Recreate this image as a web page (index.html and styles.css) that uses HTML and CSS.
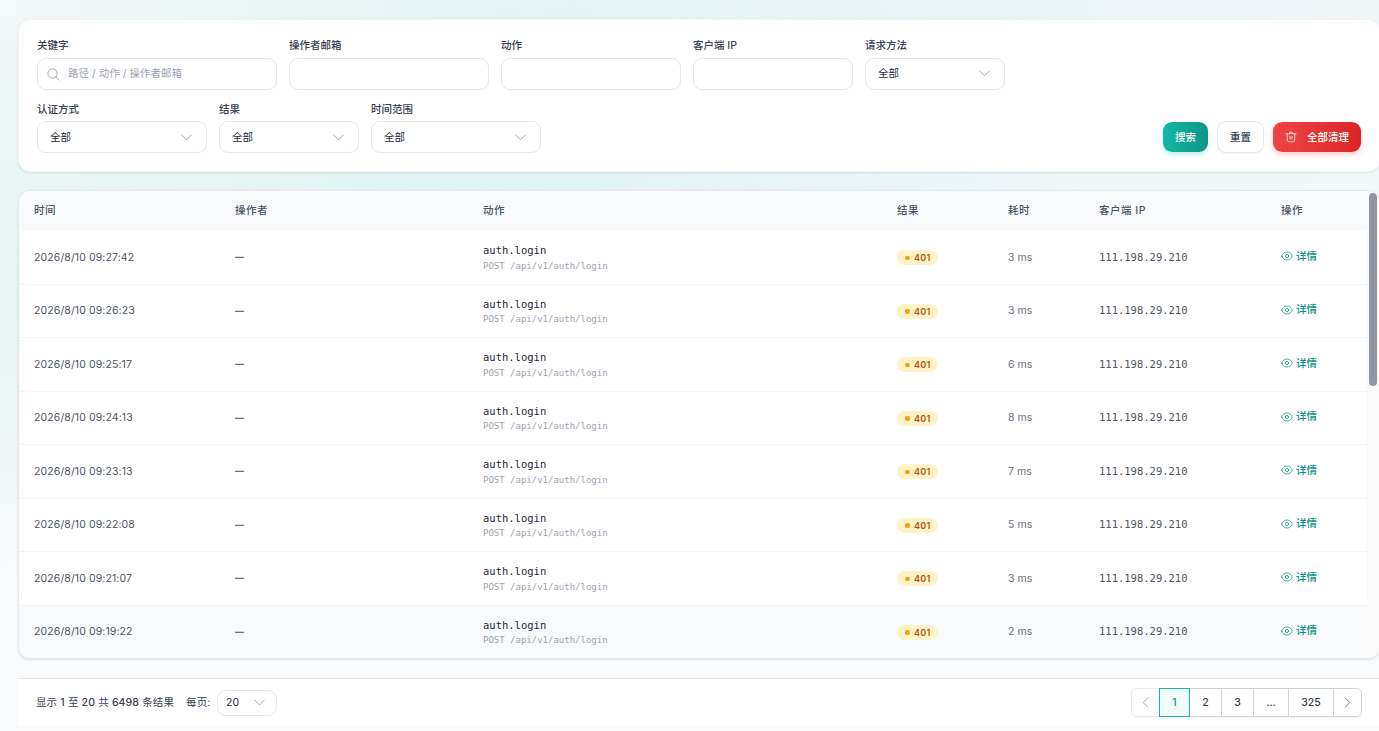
FILE: index.html
```html
<!DOCTYPE html>
<html lang="zh-CN">
<head>
    <meta charset="UTF-8">
    <meta name="viewport" content="width=device-width, initial-scale=1.0">
    <title>审计日志</title>
    <link rel="stylesheet" href="styles.css">
</head>
<body>
    <!-- shared icons -->
    <svg class="sprite">
        <symbol id="icon-down" viewBox="0 0 24 24"><path d="M19.5 8.25l-7.5 7.5-7.5-7.5"/></symbol>
        <symbol id="icon-left" viewBox="0 0 24 24"><path d="M15.75 19.5L8.25 12l7.5-7.5"/></symbol>
        <symbol id="icon-right" viewBox="0 0 24 24"><path d="M8.25 4.5l7.5 7.5-7.5 7.5"/></symbol>
        <symbol id="icon-search" viewBox="0 0 24 24"><path d="M21 21l-5.197-5.197m0 0A7.5 7.5 0 105.196 5.196a7.5 7.5 0 0010.607 10.607z"/></symbol>
        <symbol id="icon-trash" viewBox="0 0 24 24"><path d="M10 11v5.500M14 11v5.500M2 5.500h20M4.500 5.500v12.500a3.500 3.500 0 003.500 3.500h8a3.500 3.500 0 003.500-3.500V5.500M8.500 5.500L9.500 2.500h5l1 3"/></symbol>
        <symbol id="icon-eye" viewBox="0 0 24 24"><path d="M1.500 12.322a1.012 1.012 0 010-.639C3 7.200 7.200 4 12 4s9 3.200 10.500 7.678c.07.207.07.431 0 .639C21 16.800 16.800 20 12 20S3 16.800 1.500 12.322z"/><path d="M15.300 12a3.300 3.300 0 11-6.600 0 3.300 3.300 0 016.600 0z"/></symbol>
    </svg>

    <main class="page">
        <form class="card filters">
            <div class="filter-row">
                <div class="field w-240">
                    <label>关键字</label>
                    <div class="control search">
                        <svg class="icon"><use href="#icon-search"/></svg>
                        <span>路径 / 动作 / 操作者邮箱</span>
                    </div>
                </div>
                <div class="field w-200"><label>操作者邮箱</label><div class="control"></div></div>
                <div class="field w-180"><label>动作</label><div class="control"></div></div>
                <div class="field w-160"><label>客户端 IP</label><div class="control"></div></div>
                <div class="field w-140">
                    <label>请求方法</label>
                    <div class="control select raised"><span>全部</span><svg class="icon"><use href="#icon-down"/></svg></div>
                </div>
            </div>
            <div class="filter-row">
                <div class="field w-170">
                    <label>认证方式</label>
                    <div class="control select"><span>全部</span><svg class="icon"><use href="#icon-down"/></svg></div>
                </div>
                <div class="field w-140">
                    <label>结果</label>
                    <div class="control select"><span>全部</span><svg class="icon"><use href="#icon-down"/></svg></div>
                </div>
                <div class="field w-170">
                    <label>时间范围</label>
                    <div class="control select"><span>全部</span><svg class="icon"><use href="#icon-down"/></svg></div>
                </div>
                <div class="actions">
                    <button type="button" class="btn btn-primary">搜索</button>
                    <button type="button" class="btn btn-secondary">重置</button>
                    <button type="button" class="btn btn-danger"><svg class="icon"><use href="#icon-trash"/></svg>全部清理</button>
                </div>
            </div>
        </form>

        <section class="card table-card">
            <table>
                <colgroup>
                    <col class="c-time"><col class="c-user"><col class="c-action"><col class="c-result"><col class="c-cost"><col class="c-ip"><col class="c-op">
                </colgroup>
                <thead>
                    <tr><th>时间</th><th>操作者</th><th>动作</th><th>结果</th><th>耗时</th><th>客户端 IP</th><th>操作</th></tr>
                </thead>
                <tbody id="logRows"></tbody>
            </table>
            <div class="scrollbar"><div class="thumb"></div></div>
        </section>

        <footer class="pagination">
            <div class="summary">
                <p>显示 <b>1</b> 至 <b>20</b> 共 <b>6498</b> 条结果</p>
                <span class="per-page">每页:</span>
                <div class="control select page-size"><span>20</span><svg class="icon"><use href="#icon-down"/></svg></div>
            </div>
            <nav class="pages">
                <button class="prev" disabled><svg class="icon"><use href="#icon-left"/></svg></button>
                <button class="num active">1</button>
                <button class="num">2</button>
                <button class="num">3</button>
                <button class="num dots">...</button>
                <button class="num last">325</button>
                <button class="next"><svg class="icon"><use href="#icon-right"/></svg></button>
            </nav>
        </footer>
    </main>

    <script>
        const logs = [
            ['09:27:42', 3],
            ['09:26:23', 3],
            ['09:25:17', 6],
            ['09:24:13', 8],
            ['09:23:13', 7],
            ['09:22:08', 5],
            ['09:21:07', 3],
            ['09:19:22', 2]
        ];

        document.getElementById('logRows').innerHTML = logs.map(([time, ms]) => `
            <tr>
                <td class="time">2026/8/10 ${time}</td>
                <td class="user">—</td>
                <td class="action"><div class="name">auth.login</div><div class="path">POST /api/v1/auth/login</div></td>
                <td><span class="badge"><i></i>401</span></td>
                <td class="cost">${ms} ms</td>
                <td class="ip">111.198.29.210</td>
                <td><a class="detail"><svg class="icon"><use href="#icon-eye"/></svg>详情</a></td>
            </tr>`).join('');
    </script>
</body>
</html>
```

FILE: styles.css
```css
* {
    box-sizing: border-box;
}

body {
    margin: 0;
    height: 731px;
    overflow: hidden;
    font-family: Inter, "Noto Sans CJK SC", sans-serif;
    font-size: 10.5px;
    line-height: 15px;
    color: #374151;
    background-color: #f9fafb;
    background-image:
        radial-gradient(at 34% 13%, rgba(20, 184, 166, 0.09) 0, transparent 50%),
        radial-gradient(at 74% -8%, rgba(6, 150, 190, 0.06) 0, transparent 60%),
        radial-gradient(at -14% 42%, rgba(20, 184, 166, 0.08) 0, transparent 50%);
}

.sprite {
    display: none;
}

.icon {
    width: 12px;
    height: 12px;
    flex: none;
    fill: none;
    stroke: currentColor;
    stroke-width: 1.5;
    stroke-linecap: round;
    stroke-linejoin: round;
}

.page {
    width: 1362px;
    padding-top: 19px;
    margin-left: 18px;
}

.card {
    background: #fff;
    border: 1px solid #f3f4f6;
    border-radius: 12px;
    box-shadow: 0 1px 3px rgba(0, 0, 0, 0.06), 0 1px 2px rgba(0, 0, 0, 0.04);
}

/* filters */
.filters {
    height: 153px;
    padding: 18px;
    display: flex;
    flex-direction: column;
    gap: 11px;
}

.filter-row {
    display: flex;
    align-items: flex-end;
    gap: 12px;
}

.field label {
    display: block;
    margin-bottom: 5px;
    font-weight: 500;
}

.filter-row + .filter-row label {
    margin-bottom: 4px;
    padding-top: 1px;
}

.w-140 { width: 140px; }
.w-160 { width: 160px; }
.w-170 { width: 170px; }
.w-180 { width: 180px; }
.w-200 { width: 200px; }
.w-240 { width: 240px; }

.control {
    height: 32px;
    display: flex;
    align-items: center;
    border: 1px solid #e5e7eb;
    border-radius: 9px;
    background: #fff;
}

.select {
    justify-content: space-between;
    padding: 0 12px;
    color: #1f2937;
}

.select .icon {
    width: 15px;
    height: 15px;
    color: #9ca3af;
}

.raised {
    padding-bottom: 1px;
}

.search {
    gap: 7px;
    padding-left: 8px;
    color: #9ca3af;
}

.search span {
    padding-bottom: 2px;
}

.search .icon {
    width: 15px;
    height: 15px;
}

.actions {
    margin-left: auto;
    display: flex;
    align-items: center;
    gap: 9px;
}

.btn {
    height: 30px;
    padding: 0 12px;
    display: flex;
    align-items: center;
    border: 0;
    border-radius: 9px;
    font: inherit;
    font-weight: 500;
    color: #fff;
}

.btn-primary {
    background: linear-gradient(to right, #14b8a6, #0d9488);
    box-shadow: 0 3px 5px rgba(20, 184, 166, 0.25);
}

.btn-secondary {
    height: 32px;
    background: #fff;
    border: 1px solid #e5e7eb;
    color: #374151;
    box-shadow: 0 1px 2px rgba(0, 0, 0, 0.05);
}

.btn-danger {
    gap: 10px;
    background: linear-gradient(to right, #ef4444, #dc2626);
    box-shadow: 0 3px 5px rgba(239, 68, 68, 0.25);
}

/* table */
.table-card {
    height: 469px;
    margin-top: 18px;
    display: flex;
    overflow: hidden;
    border-color: #e5e7eb;
}

table {
    width: 1348px;
    table-layout: fixed;
    border-collapse: separate;
    border-spacing: 0;
}

.c-time { width: 201px; }
.c-user { width: 248px; }
.c-action { width: 414px; }
.c-result { width: 111px; }
.c-cost { width: 91px; }
.c-ip { width: 182px; }
.c-op { width: 101px; }

th {
    height: 40px;
    padding: 0 15px 2px;
    text-align: left;
    font-weight: 500;
    letter-spacing: 0.5px;
    color: #4b5563;
    background: #f9fafb;
}

td {
    height: 53.5px;
    padding: 0 15px;
    border-bottom: 1px solid #f3f4f6;
    white-space: nowrap;
}

tbody tr:last-child td {
    background: #f9fafb;
}

.time {
    letter-spacing: 0.11px;
    color: #4b5563;
}

.user {
    padding-bottom: 1px;
    font-size: 9px;
    font-weight: 900;
    color: #6b7280;
}

.name,
.ip {
    font-family: "DejaVu Sans Mono", monospace;
}

.name {
    color: #1f2937;
}

.ip {
    color: #4b5563;
}

.action {
    padding-top: 1.5px;
}

.path {
    margin-top: 1.5px;
    font-family: "DejaVu Sans Mono", monospace;
    font-size: 9px;
    line-height: 13px;
    color: #9ca3af;
}

.cost {
    letter-spacing: 0.05px;
    color: #6b7280;
}

.badge {
    height: 15px;
    padding: 0 7px 0 8px;
    display: inline-flex;
    align-items: center;
    gap: 4.5px;
    border-radius: 8px;
    background: #fef3c7;
    color: #b45309;
    font-size: 9px;
    font-weight: 600;
    letter-spacing: 0.3px;
}

.badge i {
    width: 4.5px;
    height: 4.5px;
    border-radius: 50%;
    background: #f59e0b;
}

.detail {
    padding-bottom: 2px;
    display: flex;
    align-items: center;
    gap: 3px;
    font-weight: 500;
    color: #0d9488;
}

.scrollbar {
    width: 12px;
    padding: 2px;
    background: #fafafa;
}

.thumb {
    width: 8px;
    height: 193px;
    border-radius: 4px;
    background: #9295a0;
}

/* pagination */
.pagination {
    height: 48px;
    margin-top: 19px;
    padding: 0 18px;
    display: flex;
    align-items: center;
    justify-content: space-between;
    background: #fff;
    border-top: 1px solid #e5e7eb;
}

.summary {
    display: flex;
    align-items: center;
    letter-spacing: 0.12px;
}

.summary p {
    margin: 0;
}

.summary b {
    font-weight: 500;
}

.per-page {
    margin: 0 6.5px 0 12px;
}

.page-size {
    width: 60px;
    height: 26px;
    padding: 0 9px 0 8px;
}

.pages {
    display: flex;
    border-radius: 5px;
    box-shadow: 0 1px 2px rgba(0, 0, 0, 0.05);
}

.pages button {
    height: 29px;
    padding: 0;
    margin-left: -1px;
    display: flex;
    align-items: center;
    justify-content: center;
    border: 1px solid #d1d5db;
    background: #fff;
    font: inherit;
    font-weight: 500;
    color: #374151;
}

.pages .icon {
    width: 15px;
    height: 15px;
}

.pages .prev {
    width: 29px;
    border-radius: 5px 0 0 5px;
    opacity: 0.5;
}

.pages .num {
    width: 33px;
}

.pages .active {
    width: 31px;
    z-index: 1;
    border-color: #14b8a6;
    background: #f0fdfa;
    color: #0d9488;
}

.pages .dots {
    width: 36px;
}

.pages .last {
    width: 46px;
}

.pages .next {
    width: 29px;
    border-radius: 0 5px 5px 0;
    color: #6b7280;
}
```
